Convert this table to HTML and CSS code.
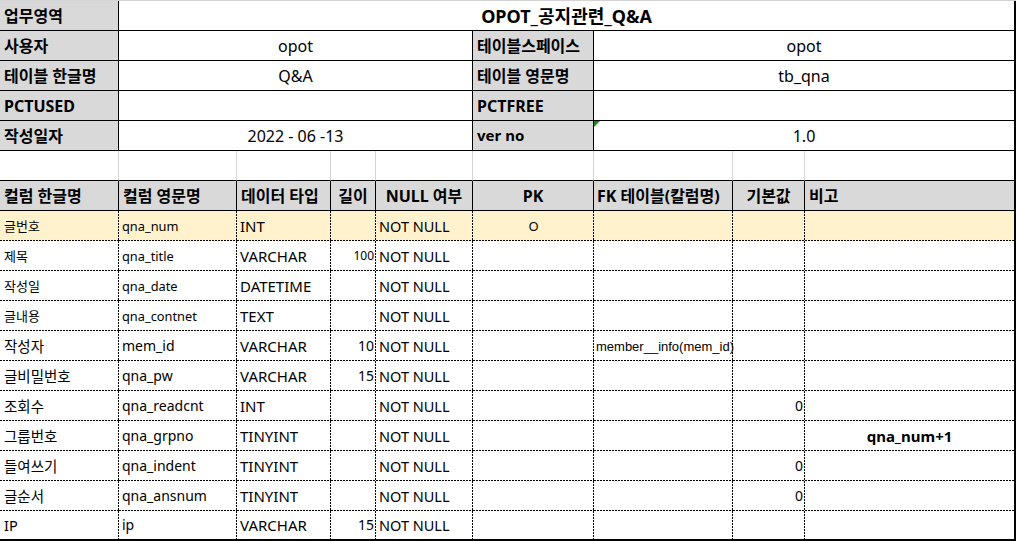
FILE: index.html
```html
<!DOCTYPE html>
<html lang="ko">
<head>
<meta charset="utf-8">
<title>OPOT_공지관련_Q&amp;A</title>
<link rel="stylesheet" href="styles.css">
</head>
<body>
<div class="sheet">
  <div class="row">
    <div class="c lab">업무영역</div>
    <div class="c title s8">OPOT_공지관련_Q&amp;A</div>
  </div>
  <div class="row">
    <div class="c lab">사용자</div>
    <div class="c val s4">opot</div>
    <div class="c lab">테이블스페이스</div>
    <div class="c val s3">opot</div>
  </div>
  <div class="row">
    <div class="c lab">테이블 한글명</div>
    <div class="c val s4">Q&amp;A</div>
    <div class="c lab">테이블 영문명</div>
    <div class="c val s3">tb_qna</div>
  </div>
  <div class="row">
    <div class="c lab">PCTUSED</div>
    <div class="c val s4"></div>
    <div class="c lab">PCTFREE</div>
    <div class="c val s3"></div>
  </div>
  <div class="row">
    <div class="c lab">작성일자</div>
    <div class="c val s4">2022 - 06 -13</div>
    <div class="c lab ver">ver no</div>
    <div class="c val s3 mark">1.0</div>
  </div>

  <div class="row gap">
    <div class="c"></div><div class="c"></div><div class="c"></div><div class="c"></div><div class="c"></div><div class="c"></div><div class="c"></div><div class="c"></div><div class="c"></div>
  </div>

  <div class="row head">
    <div class="c">컬럼 한글명</div>
    <div class="c">컬럼 영문명</div>
    <div class="c">데이터 타입</div>
    <div class="c ctr">길이</div>
    <div class="c ctr">NULL 여부</div>
    <div class="c ctr">PK</div>
    <div class="c hfk">FK 테이블(칼럼명)</div>
    <div class="c ctr">기본값</div>
    <div class="c">비고</div>
  </div>

  <div class="row data hl sm">
    <div class="c k">글번호</div><div class="c en">qna_num</div><div class="c ty">INT</div><div class="c num"></div><div class="c nn">NOT NULL</div><div class="c pk">O</div><div class="c fk"></div><div class="c num"></div><div class="c note"></div>
  </div>
  <div class="row data sm">
    <div class="c k">제목</div><div class="c en">qna_title</div><div class="c ty">VARCHAR</div><div class="c num tiny">100</div><div class="c nn">NOT NULL</div><div class="c pk"></div><div class="c fk"></div><div class="c num"></div><div class="c note"></div>
  </div>
  <div class="row data sm">
    <div class="c k">작성일</div><div class="c en">qna_date</div><div class="c ty">DATETIME</div><div class="c num"></div><div class="c nn">NOT NULL</div><div class="c pk"></div><div class="c fk"></div><div class="c num"></div><div class="c note"></div>
  </div>
  <div class="row data sm">
    <div class="c k">글내용</div><div class="c en">qna_contnet</div><div class="c ty">TEXT</div><div class="c num"></div><div class="c nn">NOT NULL</div><div class="c pk"></div><div class="c fk"></div><div class="c num"></div><div class="c note"></div>
  </div>
  <div class="row data">
    <div class="c k">작성자</div><div class="c en">mem_id</div><div class="c ty">VARCHAR</div><div class="c num">10</div><div class="c nn">NOT NULL</div><div class="c pk"></div><div class="c fk">member__info(mem_id)</div><div class="c num"></div><div class="c note"></div>
  </div>
  <div class="row data">
    <div class="c k">글비밀번호</div><div class="c en">qna_pw</div><div class="c ty">VARCHAR</div><div class="c num">15</div><div class="c nn">NOT NULL</div><div class="c pk"></div><div class="c fk"></div><div class="c num"></div><div class="c note"></div>
  </div>
  <div class="row data">
    <div class="c k">조회수</div><div class="c en">qna_readcnt</div><div class="c ty">INT</div><div class="c num"></div><div class="c nn">NOT NULL</div><div class="c pk"></div><div class="c fk"></div><div class="c num">0</div><div class="c note"></div>
  </div>
  <div class="row data">
    <div class="c k">그룹번호</div><div class="c en">qna_grpno</div><div class="c ty">TINYINT</div><div class="c num"></div><div class="c nn">NOT NULL</div><div class="c pk"></div><div class="c fk"></div><div class="c num"></div><div class="c note">qna_num+1</div>
  </div>
  <div class="row data">
    <div class="c k">들여쓰기</div><div class="c en">qna_indent</div><div class="c ty">TINYINT</div><div class="c num"></div><div class="c nn">NOT NULL</div><div class="c pk"></div><div class="c fk"></div><div class="c num">0</div><div class="c note"></div>
  </div>
  <div class="row data">
    <div class="c k">글순서</div><div class="c en">qna_ansnum</div><div class="c ty">TINYINT</div><div class="c num"></div><div class="c nn">NOT NULL</div><div class="c pk"></div><div class="c fk"></div><div class="c num">0</div><div class="c note"></div>
  </div>
  <div class="row data">
    <div class="c k">IP</div><div class="c en">ip</div><div class="c ty">VARCHAR</div><div class="c num">15</div><div class="c nn">NOT NULL</div><div class="c pk"></div><div class="c fk"></div><div class="c num"></div><div class="c note"></div>
  </div>
</div>
</body>
</html>
```
FILE: styles.css
```css
body {
  margin: 0;
  background: #fff;
  color: #000;
  font-family: "Noto Sans", "Noto Sans CJK KR", sans-serif;
}

.sheet {
  display: grid;
  grid-template-columns: 119px 118px 94px 45px 97px 121px 139px 72px 211px;
  grid-auto-rows: 30px;
  width: 1016px;
  border-top: 1px solid #d4d4d4;
}

.row {
  display: contents;
}

.c {
  box-sizing: border-box;
  display: flex;
  align-items: center;
  justify-content: flex-start;
  white-space: pre;
  min-width: 0;
  padding: 0 4px;
  border-right: 1px solid #000;
  border-bottom: 1px solid #000;
  font-size: 16px;
  line-height: 1;
}

.row > .c:last-child {
  border-right: 2px solid #000;
}

.s8 { grid-column: span 8; }
.s4 { grid-column: span 4; }
.s3 { grid-column: span 3; }

.lab {
  background: #d9d9d9;
  font-weight: 700;
  font-size: 16px;
}

.ver {
  font-size: 15px;
}

.title {
  justify-content: center;
  font-weight: 700;
  font-size: 18px;
}

.val {
  justify-content: center;
  font-size: 16px;
}

.mark {
  position: relative;
}

.mark::before {
  content: "";
  position: absolute;
  top: 0;
  left: 0;
  border-top: 6px solid #1a8a1a;
  border-right: 6px solid transparent;
}

.gap > .c {
  border-right: 1px solid #d4d4d4;
}

.head > .c {
  background: #d9d9d9;
  font-weight: 700;
  font-size: 16px;
}

.head > .hfk {
  padding: 0 2px 0 3px;
}

.ctr {
  justify-content: center;
}

/* dotted hairline grid of the data area: 2px on, 1px off */
.data > .c {
  border-right: 0;
  border-bottom: 0;
  font-size: 15px;
  padding: 0 3px;
  background-image:
    repeating-linear-gradient(to bottom, #000 0 2px, transparent 2px 3px),
    repeating-linear-gradient(to right, #000 0 2px, transparent 2px 3px);
  background-size: 1px 100%, 100% 1px;
  background-position: right top, left bottom;
  background-repeat: no-repeat;
}

.data > .c:last-child {
  background-size: 0 0, 100% 1px;
}

.data:last-child > .c {
  border-bottom: 2px solid #000;
  background-size: 1px 100%, 0 0;
}

.data:last-child > .c:last-child {
  background-size: 0 0, 0 0;
}

.hl > .c {
  background-color: #fff2cc;
}

.data > .k {
  padding-left: 4px;
  font-size: 14.5px;
}

.data > .en {
  font-size: 14px;
}

.sm > .k {
  font-size: 13px;
}

.sm > .en {
  font-size: 12.8px;
}

.data > .ty {
  font-size: 15px;
}

.data > .num {
  justify-content: flex-end;
  font-size: 14px;
  padding-right: 2px;
}

.data > .tiny {
  font-size: 12px;
}

.data > .nn {
  font-size: 14.5px;
}

.data > .pk {
  justify-content: center;
  font-size: 13px;
}

.data > .fk {
  font-family: "Liberation Sans", Arial, sans-serif;
  font-size: 13px;
  padding-left: 2px;
}

.data > .note {
  justify-content: center;
  font-weight: 700;
  font-size: 15px;
}
```
